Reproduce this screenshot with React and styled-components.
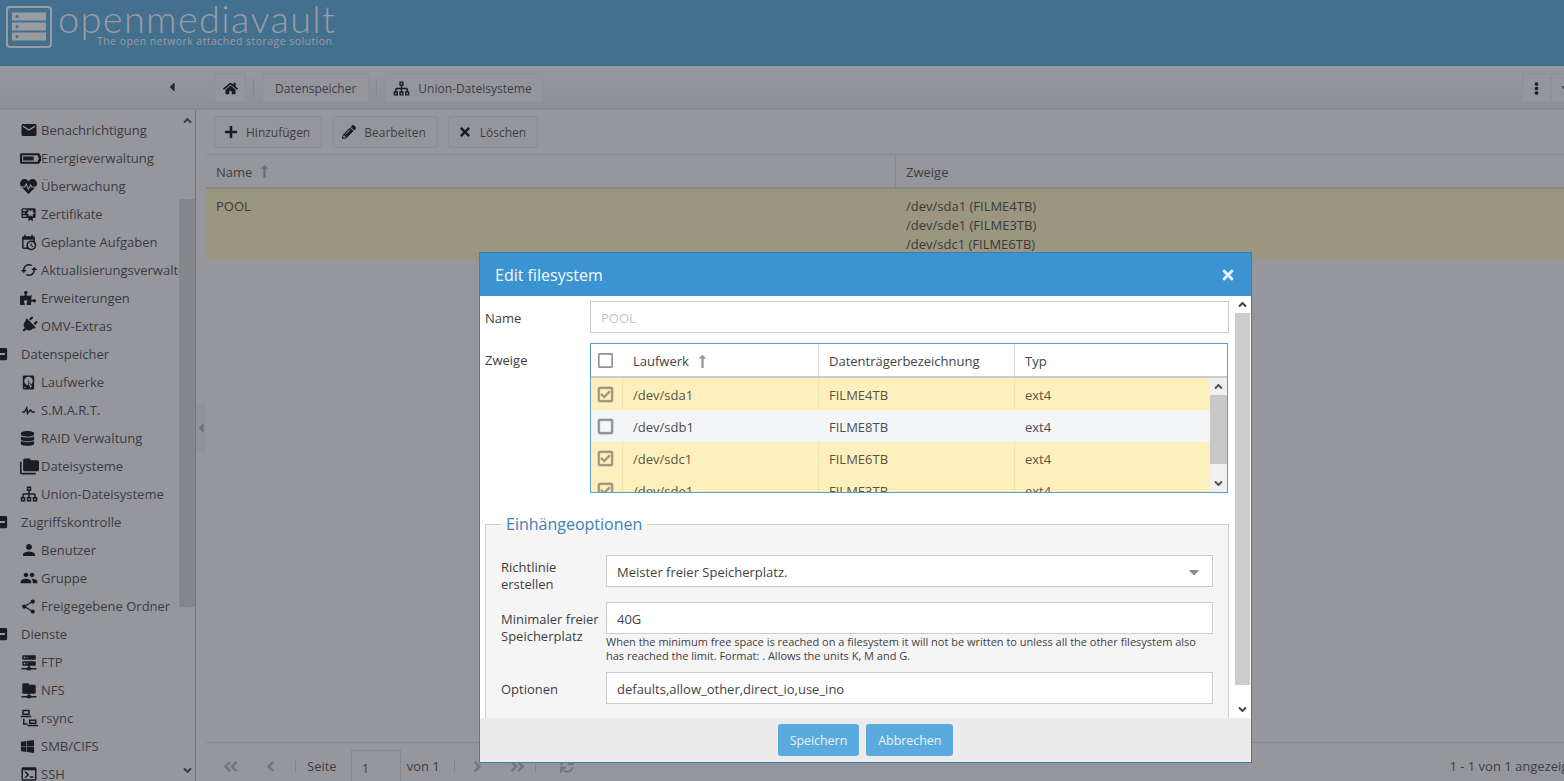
import React from 'react'
import styled, {createGlobalStyle} from 'styled-components'
import {
    FaHome, FaPlus, FaPencilAlt, FaTimes, FaEllipsisV, FaCaretLeft, FaCaretDown, FaLongArrowAltUp,
    FaPuzzlePiece, FaPlug, FaDatabase, FaWindows, FaHeartbeat, FaBatteryThreeQuarters,
    FaAngleUp, FaAngleDown, FaAngleLeft, FaAngleRight, FaAngleDoubleLeft, FaAngleDoubleRight,
    FaMinusSquare, FaRegCheckSquare, FaRegSquare, FaSync,
} from 'react-icons/fa'
import {MdEmail, MdPerson, MdPeople, MdShare, MdCached} from 'react-icons/md'

const Mdi = ({d, size = 18}) => (
    <svg width={size} height={size} viewBox="0 0 24 24" fill="currentColor"><path d={d} /></svg>
)

const certificate = 'M4,3C2.89,3 2,3.89 2,5V15A2,2 0 0,0 4,17H12V22L15,19L18,22V17H20A2,2 0 0,0 22,15V8L22,6V5A2,2 0 0,0 20,3H16V3H4M12,5L15,7L18,5V8.5L21,10L18,11.5V15L15,13L12,15V11.5L9,10L12,8.5V5M4,5H9V7H4V5M4,9H7V11H4V9M4,13H9V15H4V13Z'
const calendarClock = 'M15,13H16.5V15.82L18.94,17.23L18.19,18.53L15,16.69V13M19,8H5V19H9.67C9.24,18.09 9,17.07 9,16A7,7 0 0,1 16,9C17.07,9 18.09,9.24 19,9.67V8M5,21C3.89,21 3,20.1 3,19V5C3,3.89 3.89,3 5,3H6V1H8V3H16V1H18V3H19A2,2 0 0,1 21,5V11.1C22.24,12.36 23,14.09 23,16A7,7 0 0,1 16,23C14.09,23 12.36,22.24 11.1,21H5M16,11.15A4.85,4.85 0 0,0 11.15,16C11.15,18.68 13.32,20.85 16,20.85A4.85,4.85 0 0,0 20.85,16C20.85,13.32 18.68,11.15 16,11.15Z'
const harddisk = 'M6,2H18A2,2 0 0,1 20,4V20A2,2 0 0,1 18,22H6A2,2 0 0,1 4,20V4A2,2 0 0,1 6,2M12,4A6,6 0 0,0 6,10C6,13.31 8.69,16 12.1,16L11.22,13.77C10.95,13.29 11.11,12.68 11.59,12.4L12.45,11.9C12.93,11.63 13.54,11.79 13.82,12.27L15.74,14.69C17.12,13.59 18,11.9 18,10A6,6 0 0,0 12,4M12,9A1,1 0 0,1 13,10A1,1 0 0,1 12,11A1,1 0 0,1 11,10A1,1 0 0,1 12,9M7,18A1,1 0 0,0 6,19A1,1 0 0,0 7,20A1,1 0 0,0 8,19A1,1 0 0,0 7,18M12.09,13.27L14.58,19.58L17.17,18.08L12.95,12.77L12.09,13.27Z'
const pulse = 'M3,13H5.79L10.1,4.79L11.28,13.75L14.5,9.66L17.83,13H21V15H17L14.67,12.67L9.92,18.73L8.94,11.31L7,15H3V13Z'
const folderMultiple = 'M22,4H14L12,2H6A2,2 0 0,0 4,4V16A2,2 0 0,0 6,18H22A2,2 0 0,0 24,16V6A2,2 0 0,0 22,4M2,6H0V11H0V20A2,2 0 0,0 2,22H20V20H2V6Z'
const sitemap = 'M9,2V8H11V11H5C3.89,11 3,11.89 3,13V16H1V22H7V16H5V13H11V16H9V22H15V16H13V13H19V16H17V22H23V16H21V13C21,11.89 20.1,11 19,11H13V8H15V2H9M3,18H5V20H3V18M11,18H13V20H11V18M19,18H21V20H19V18M11,4H13V6H11V4Z'
const serverNetwork = 'M13,19H14A1,1 0 0,1 15,20H22V22H15A1,1 0 0,1 14,23H10A1,1 0 0,1 9,22H2V20H9A1,1 0 0,1 10,19H11V17H4A1,1 0 0,1 3,16V12A1,1 0 0,1 4,11H20A1,1 0 0,1 21,12V16A1,1 0 0,1 20,17H13V19M4,3H20A1,1 0 0,1 21,4V8A1,1 0 0,1 20,9H4A1,1 0 0,1 3,8V4A1,1 0 0,1 4,3M9,7H10V5H9V7M9,15H10V13H9V15M5,5V7H7V5H5M5,13V15H7V13H5Z'
const folderNetwork = 'M3,15V5A2,2 0 0,1 5,3H11L13,5H19A2,2 0 0,1 21,7V15A2,2 0 0,1 19,17H13V19H14A1,1 0 0,1 15,20H22V22H15A1,1 0 0,1 14,23H10A1,1 0 0,1 9,22H2V20H9A1,1 0 0,1 10,19H11V17H5A2,2 0 0,1 3,15Z'
const consoleBox = 'M20,19V7H4V19H20M20,3A2,2 0 0,1 22,5V19C22,20.1 21.1,21 20,21H4A2,2 0 0,1 2,19V5C2,3.89 2.9,3 4,3H20M13,17V15H18V17H13M9.58,13L5.57,9H8.4L11.7,12.3C12.09,12.69 12.09,13.33 11.7,13.72L8.42,17H5.59L9.58,13Z'
const laptops = 'M3,1H13V8H3V1M5,3V6H11V3H5M1,9H15V11H1V9M4,13H6V19H10V21H4V13M12,14H22V20H12V14M14,16V18H20V16H14M10,21H24V23H10V21Z'

const GlobalStyle = createGlobalStyle`
  html, body {
    margin: 0;
    height: 100%;
    overflow: hidden;
    background: #96979c;
    font-family: "Open Sans", "Liberation Sans", sans-serif;
    font-size: 13px;
    color: #3d3e44;
  }
`

const Page = styled.div`
  position: relative;
  width: 1564px;
  height: 781px;
  overflow: hidden;
  display: flex;
  flex-direction: column;
`

const Header = styled.header`
  height: 66px;
  flex: none;
  background: #44708f;
  display: flex;
  gap: 6px;
  padding: 6px 0 0 6px;
  box-sizing: border-box;
  color: #9a9ca3;
`

const Brand = styled.div`
  width: 280px;
`

const BrandName = styled.div`
  font-family: Lato, "Open Sans", sans-serif;
  font-weight: 300;
  font-size: 38px;
  line-height: 34px;
  letter-spacing: 1.3px;
  margin-top: -5px;
  white-space: nowrap;
`

const BrandTag = styled.div`
  font-size: 10.5px;
  line-height: 12px;
  letter-spacing: 0.45px;
  margin-left: 39px;
  white-space: nowrap;
`

const Body = styled.div`
  flex: 1;
  display: flex;
  min-height: 0;
`

const Side = styled.aside`
  width: 196px;
  flex: none;
  display: flex;
  flex-direction: column;
  box-sizing: border-box;
`

const Collapse = styled.div`
  height: 44px;
  flex: none;
  display: flex;
  align-items: center;
  justify-content: flex-end;
  padding-right: 17px;
  color: #26272c;
  font-size: 14px;
  background: linear-gradient(#98999e, #8e8f94);
  border-bottom: 2px solid #87888d;
  box-sizing: border-box;
`

const SideBody = styled.div`
  flex: 1;
  display: flex;
  min-height: 0;
  border-right: 1px solid #5b7d99;
`

const Menu = styled.nav`
  width: 179px;
  flex: none;
  overflow: hidden;
  padding-top: 6px;
  box-sizing: border-box;
`

const MenuRow = styled.div`
  height: 28px;
  display: flex;
  align-items: center;
  white-space: nowrap;
  color: #3a3b42;
`

const MenuIcon = styled.span`
  width: 21px;
  margin-left: 20px;
  flex: none;
  display: flex;
  align-items: center;
  color: #1b1c22;
  transform: ${({$tilt}) => ($tilt ? 'rotate(45deg)' : 'none')};
`

const MenuGroupIcon = styled.span`
  width: 21px;
  flex: none;
  display: flex;
  align-items: center;
  color: #1b1c22;

  svg {
    margin-left: -6px;
  }
`

const Track = styled.div`
  width: ${({$width}) => $width}px;
  flex: none;
  display: flex;
  flex-direction: column;
  background: ${({$bg}) => $bg};
  color: ${({$arrow}) => $arrow};
`

const TrackEnd = styled.div`
  height: ${({$height}) => $height}px;
  flex: none;
  display: flex;
  align-items: center;
  justify-content: center;
  font-size: 13px;
`

const TrackRail = styled.div`
  flex: 1;
  min-height: 0;
  display: flex;
  flex-direction: column;
`

const Thumb = styled.div`
  background: ${({$color}) => $color};
  margin-top: ${({$top}) => $top}px;
  height: ${({$height}) => $height}px;
  flex: none;
`

const Scroll = ({width, bg, arrow, thumb, top, height, end}) => (
    <Track $width={width} $bg={bg} $arrow={arrow}>
        <TrackEnd $height={end}><FaAngleUp /></TrackEnd>
        <TrackRail><Thumb $color={thumb} $top={top} $height={height} /></TrackRail>
        <TrackEnd $height={end}><FaAngleDown /></TrackEnd>
    </Track>
)

const Splitter = styled.div`
  width: 10px;
  flex: none;
  display: flex;
  flex-direction: column;
  color: #6e6f75;
  font-size: 14px;
`

const SplitHandle = styled.div`
  margin-top: 338px;
  height: 48px;
  background: #919297;
  display: flex;
  align-items: center;
  justify-content: center;
`

const Main = styled.main`
  flex: 1;
  min-width: 0;
  display: flex;
  flex-direction: column;
`

const Crumbs = styled.div`
  height: 44px;
  flex: none;
  margin-left: -10px;
  padding: 7px 0 0 18px;
  box-sizing: border-box;
  display: flex;
  align-items: flex-start;
  background: linear-gradient(#98999e, #8e8f94);
  border-bottom: 2px solid #87888d;
`

const Crumb = styled.div`
  height: 30px;
  padding: 0 ${({$right = 12}) => $right}px 0 ${({$left = 12}) => $left}px;
  display: flex;
  align-items: center;
  gap: 8px;
  background: #95969b;
  border: 1px solid #8f9095;
  border-radius: 2px;
  color: #3d3e44;
  font-size: 12px;
  box-sizing: border-box;
  white-space: nowrap;

  svg {
    color: #1b1c22;
  }
`

const CrumbSep = styled.div`
  width: 1px;
  height: 18px;
  margin: 6px 8px 0 7px;
  background: #85868b;
`

const CrumbRight = styled.div`
  margin-left: auto;
  display: flex;
  margin-right: -16px;
`

const CrumbSquare = styled.div`
  width: 29px;
  height: 30px;
  display: flex;
  align-items: center;
  justify-content: center;
  background: #95969b;
  border: 1px solid #8f9095;
  box-sizing: border-box;
  color: ${({$muted}) => ($muted ? '#55565c' : '#1b1c22')};
  font-size: ${({$muted}) => ($muted ? '16px' : '13px')};
`

const Toolbar = styled.div`
  height: 45px;
  flex: none;
  padding: 6px 8px 0;
  box-sizing: border-box;
  display: flex;
  gap: 10px;
  align-items: flex-start;
  border-bottom: 1px solid #87888d;
`

const ToolButton = styled.div`
  height: 32px;
  padding: 0 11px 0 9px;
  display: flex;
  align-items: center;
  gap: 8px;
  box-sizing: border-box;
  border: 1px solid #8c8d92;
  border-radius: 3px;
  background: #95969b;
  font-size: 12px;

  svg {
    color: #1b1c22;
    font-size: 14px;
  }
`

const GridHead = styled.div`
  height: 34px;
  flex: none;
  display: grid;
  grid-template-columns: 689px 1fr;
  border-bottom: 2px solid #87888d;
  box-sizing: border-box;
`

const HeadCell = styled.div`
  display: flex;
  align-items: center;
  gap: 5px;
  padding: 1px 0 0 ${({$pad}) => $pad}px;

  & + & {
    border-left: 1px solid #87888d;
  }

  svg {
    color: #6e6f75;
  }
`

const GridRow = styled.div`
  height: 70px;
  flex: none;
  background: #9b967f;
  display: grid;
  grid-template-columns: 690px 1fr;
  padding-top: 8px;
  box-sizing: border-box;
  line-height: 19px;
  color: #3a3a3a;
`

const GridCell = styled.div`
  padding-left: ${({$pad}) => $pad}px;
`

const GridFill = styled.div`
  flex: 1;
`

const Pager = styled.div`
  height: 39px;
  flex: none;
  border-top: 1px solid #87888d;
  display: flex;
  align-items: flex-start;
  padding: 7px 0 0 16px;
  box-sizing: border-box;
  white-space: nowrap;
`

const PagerIcon = styled.span`
  width: ${({$width}) => $width}px;
  height: 32px;
  flex: none;
  display: flex;
  align-items: center;
  color: #75767c;
  font-size: 17px;
`

const PagerSep = styled.div`
  width: 1px;
  height: 14px;
  margin: 9px ${({$right}) => $right}px 0 ${({$left = 0}) => $left}px;
  background: #85868b;
  flex: none;
`

const PagerText = styled.span`
  line-height: 32px;
  flex: none;
`

const PagerInput = styled.div`
  width: 50px;
  height: 40px;
  margin: 0 6px 0 14px;
  border: 1px solid #87888d;
  box-sizing: border-box;
  padding: 8px 0 0 10px;
  flex: none;
`

const PagerInfo = styled.span`
  margin-left: auto;
  line-height: 32px;
  margin-right: -9px;
`

const Dialog = styled.section`
  position: absolute;
  left: 479px;
  top: 252px;
  width: 773px;
  height: 511px;
  box-sizing: border-box;
  border: 1px solid #3a7fb2;
  display: flex;
  flex-direction: column;
  background: #fff;
`

const DialogTitle = styled.div`
  height: 43px;
  flex: none;
  background: #3b94d1;
  color: #f4f8fb;
  font-size: 16px;
  padding: 0 15px;
  display: flex;
  align-items: center;
  justify-content: space-between;

  svg {
    color: #e6f1f9;
    font-size: 16px;
  }
`

const DialogBody = styled.div`
  flex: 1;
  min-height: 0;
  display: flex;
`

const DialogContent = styled.div`
  width: 755px;
  flex: none;
  overflow: hidden;
  padding: 5px 6px 0 5px;
  box-sizing: border-box;
`

const FormRow = styled.div`
  display: grid;
  grid-template-columns: ${({$label}) => $label}px 1fr;
  margin-bottom: ${({$gap}) => $gap}px;
  color: #3d3e44;
`

const FormLabel = styled.div`
  padding-top: ${({$top}) => $top}px;
  line-height: 17px;
`

const TextBox = styled.div`
  height: 32px;
  box-sizing: border-box;
  border: 1px solid #ccc;
  background: #fff;
  padding: 1px 10px 0;
  display: flex;
  align-items: center;
  justify-content: space-between;
  color: ${({$muted}) => ($muted ? '#c4c4c4' : '#444')};

  svg {
    color: #8d8d8d;
    font-size: 16px;
  }
`

const Picker = styled.div`
  height: 150px;
  width: 638px;
  box-sizing: border-box;
  border: 1px solid #5b9fc4;
  background: #fff;
  display: flex;
  flex-direction: column;
  overflow: hidden;
`

const PickerHead = styled.div`
  height: 34px;
  flex: none;
  display: grid;
  grid-template-columns: 32px 196px 196px 1fr;
  border-bottom: 2px solid #ccc;
  box-sizing: border-box;
`

const PickerHeadCell = styled.div`
  display: flex;
  align-items: center;
  gap: 6px;
  padding: ${({$center}) => ($center ? 0 : 2)}px 0 0 ${({$center}) => ($center ? 6 : 10)}px;
  border-right: ${({$center}) => ($center ? 'none' : '1px solid #d8d8d8')};
  color: #444;

  &:last-child {
    border-right: none;
  }

  svg {
    color: #999;
  }
`

const PickerBody = styled.div`
  flex: 1;
  min-height: 0;
  display: flex;
`

const PickerRows = styled.div`
  flex: 1;
  min-width: 0;
  overflow: hidden;
`

const PickerRow = styled.div`
  height: 32px;
  display: grid;
  grid-template-columns: 32px 196px 196px 1fr;
  background: ${({$on}) => ($on ? '#fef0bd' : '#f4f5f7')};
  color: ${({$on}) => ($on ? '#5a5340' : '#4a4b50')};
`

const PickerCell = styled.div`
  display: flex;
  align-items: center;
  padding: ${({$center}) => ($center ? 0 : 2)}px 0 0 ${({$center}) => ($center ? 6 : 10)}px;
  border-right: 1px solid ${({$on}) => ($on ? '#efe3b4' : '#f4f5f7')};

  &:last-child {
    border-right: none;
  }

  svg {
    font-size: 17px;
    color: ${({$on}) => ($on ? '#9d9682' : '#8f9095')};
    stroke: currentColor;
    stroke-width: 24;
  }
`

const Fieldset = styled.fieldset`
  margin: 20px 0 0;
  width: 744px;
  height: 220px;
  box-sizing: border-box;
  border: 1px solid #cfcfcf;
  border-bottom: none;
  background: #f5f5f5;
  padding: 20px 15px 0;
`

const Legend = styled.legend`
  font-size: 16px;
  color: #3f83b8;
  padding: 0 5px;
  line-height: 22px;
`

const Hint = styled.div`
  font-size: 11px;
  line-height: 14px;
  padding-top: 1px;
  color: #3d3e44;
`

const DialogFooter = styled.div`
  height: 44px;
  flex: none;
  background: #ececec;
  display: flex;
  justify-content: center;
  gap: 7px;
  padding-top: 6px;
  box-sizing: border-box;
`

const FooterButton = styled.div`
  height: 32px;
  padding: 0 12px;
  display: flex;
  align-items: center;
  background: #5aaade;
  border-radius: 3px;
  color: #eaf4fb;
  font-size: 12.4px;
`

const menu = [
    {icon: <MdEmail size={18} />, text: 'Benachrichtigung'},
    {icon: <FaBatteryThreeQuarters size={21} />, text: 'Energieverwaltung'},
    {icon: <FaHeartbeat size={17} />, text: 'Überwachung'},
    {icon: <Mdi d={certificate} size={17} />, text: 'Zertifikate'},
    {icon: <Mdi d={calendarClock} size={17} />, text: 'Geplante Aufgaben'},
    {icon: <MdCached size={18} />, text: 'Aktualisierungsverwaltung'},
    {icon: <FaPuzzlePiece size={16} />, text: 'Erweiterungen'},
    {icon: <FaPlug size={17} />, tilt: true, text: 'OMV-Extras'},
    {group: true, text: 'Datenspeicher'},
    {icon: <Mdi d={harddisk} size={17} />, text: 'Laufwerke'},
    {icon: <Mdi d={pulse} size={17} />, text: 'S.M.A.R.T.'},
    {icon: <FaDatabase size={15} />, text: 'RAID Verwaltung'},
    {icon: <Mdi d={folderMultiple} size={19} />, text: 'Dateisysteme'},
    {icon: <Mdi d={sitemap} size={18} />, text: 'Union-Dateisysteme'},
    {group: true, text: 'Zugriffskontrolle'},
    {icon: <MdPerson size={18} />, text: 'Benutzer'},
    {icon: <MdPeople size={18} />, text: 'Gruppe'},
    {icon: <MdShare size={17} />, text: 'Freigegebene Ordner'},
    {group: true, text: 'Dienste'},
    {icon: <Mdi d={serverNetwork} size={18} />, text: 'FTP'},
    {icon: <Mdi d={folderNetwork} size={18} />, text: 'NFS'},
    {icon: <Mdi d={laptops} size={18} />, text: 'rsync'},
    {icon: <FaWindows size={15} />, text: 'SMB/CIFS'},
    {icon: <Mdi d={consoleBox} size={18} />, text: 'SSH'},
]

const drives = [
    {dev: '/dev/sda1', label: 'FILME4TB', on: true},
    {dev: '/dev/sdb1', label: 'FILME8TB', on: false},
    {dev: '/dev/sdc1', label: 'FILME6TB', on: true},
    {dev: '/dev/sde1', label: 'FILME3TB', on: true},
]

const Logo = () => (
    <svg width="46" height="42" viewBox="0 0 46 42" fill="none">
        <rect x="1" y="1" width="44" height="40" rx="3" stroke="currentColor" strokeWidth="2" />
        <rect x="6" y="6.500" width="34" height="8" fill="currentColor" />
        <rect x="6" y="16.500" width="34" height="8" fill="currentColor" />
        <rect x="6" y="26.500" width="34" height="8" fill="currentColor" />
        <circle cx="11" cy="10.500" r="1.500" fill="#44708f" />
        <circle cx="11" cy="20.500" r="1.500" fill="#44708f" />
        <circle cx="11" cy="30.500" r="1.500" fill="#44708f" />
    </svg>
)

const App = () => (
    <Page>
        <GlobalStyle />
        <Header>
            <Logo />
            <Brand>
                <BrandName>openmediavault</BrandName>
                <BrandTag>The open network attached storage solution</BrandTag>
            </Brand>
        </Header>
        <Body>
            <Side>
                <Collapse><FaCaretLeft /></Collapse>
                <SideBody>
                    <Menu>
                        {menu.map((m) => (
                            <MenuRow key={m.text}>
                                {m.group ? (
                                    <MenuGroupIcon><FaMinusSquare size={14} /></MenuGroupIcon>
                                ) : (
                                    <MenuIcon $tilt={m.tilt}>{m.icon}</MenuIcon>
                                )}
                                {m.text}
                            </MenuRow>
                        ))}
                    </Menu>
                    <Scroll width={16} bg="#96979c" arrow="#3d3e44" thumb="#85868b" top={68} height={408} end={21} />
                </SideBody>
            </Side>
            <Splitter>
                <SplitHandle><FaCaretLeft /></SplitHandle>
            </Splitter>
            <Main>
                <Crumbs>
                    <Crumb $left={8} $right={7}><FaHome size={15} /></Crumb>
                    <CrumbSep />
                    <Crumb>Datenspeicher</Crumb>
                    <CrumbSep />
                    <Crumb $left={7} $right={10}><Mdi d={sitemap} size={17} />Union-Dateisysteme</Crumb>
                    <CrumbRight>
                        <CrumbSquare><FaEllipsisV /></CrumbSquare>
                        <CrumbSquare $muted><FaCaretDown /></CrumbSquare>
                    </CrumbRight>
                </Crumbs>
                <Toolbar>
                    <ToolButton><FaPlus />Hinzufügen</ToolButton>
                    <ToolButton><FaPencilAlt />Bearbeiten</ToolButton>
                    <ToolButton><FaTimes />Löschen</ToolButton>
                </Toolbar>
                <GridHead>
                    <HeadCell $pad={10}>Name <FaLongArrowAltUp size={15} /></HeadCell>
                    <HeadCell $pad={10}>Zweige</HeadCell>
                </GridHead>
                <GridRow>
                    <GridCell $pad={10}>POOL</GridCell>
                    <GridCell $pad={10}>
                        /dev/sda1 (FILME4TB)<br />
                        /dev/sde1 (FILME3TB)<br />
                        /dev/sdc1 (FILME6TB)
                    </GridCell>
                </GridRow>
                <GridFill />
                <Pager>
                    <PagerIcon $width={40}><FaAngleDoubleLeft /></PagerIcon>
                    <PagerIcon $width={33}><FaAngleLeft /></PagerIcon>
                    <PagerSep $right={11} />
                    <PagerText>Seite</PagerText>
                    <PagerInput>1</PagerInput>
                    <PagerText>von 1</PagerText>
                    <PagerSep $left={14} $right={14} />
                    <PagerIcon $width={40}><FaAngleRight /></PagerIcon>
                    <PagerIcon $width={26}><FaAngleDoubleRight /></PagerIcon>
                    <PagerSep $right={24} />
                    <PagerIcon $width={20}><FaSync size={14} /></PagerIcon>
                    <PagerInfo>1 - 1 von 1 angezeigt</PagerInfo>
                </Pager>
            </Main>
        </Body>
        <Dialog role="dialog">
            <DialogTitle>Edit filesystem <FaTimes /></DialogTitle>
            <DialogBody>
                <DialogContent>
                    <FormRow $label={105} $gap={10}>
                        <FormLabel $top={9}>Name</FormLabel>
                        <TextBox $muted>POOL</TextBox>
                    </FormRow>
                    <FormRow $label={105} $gap={0}>
                        <FormLabel $top={9}>Zweige</FormLabel>
                        <Picker>
                            <PickerHead>
                                <PickerHeadCell $center><FaRegSquare size={17} color="#8f9095" /></PickerHeadCell>
                                <PickerHeadCell>Laufwerk <FaLongArrowAltUp size={15} /></PickerHeadCell>
                                <PickerHeadCell>Datenträgerbezeichnung</PickerHeadCell>
                                <PickerHeadCell>Typ</PickerHeadCell>
                            </PickerHead>
                            <PickerBody>
                                <PickerRows>
                                    {drives.map((d) => (
                                        <PickerRow key={d.dev} $on={d.on}>
                                            <PickerCell $center $on={d.on}>{d.on ? <FaRegCheckSquare /> : <FaRegSquare />}</PickerCell>
                                            <PickerCell $on={d.on}>{d.dev}</PickerCell>
                                            <PickerCell $on={d.on}>{d.label}</PickerCell>
                                            <PickerCell $on={d.on}>ext4</PickerCell>
                                        </PickerRow>
                                    ))}
                                </PickerRows>
                                <Scroll width={17} bg="#f0f0f0" arrow="#555" thumb="#c8c8c8" top={0} height={69} end={17} />
                            </PickerBody>
                        </Picker>
                    </FormRow>
                    <Fieldset>
                        <Legend>Einhängeoptionen</Legend>
                        <FormRow $label={105} $gap={9}>
                            <FormLabel $top={4}>Richtlinie<br />erstellen</FormLabel>
                            <TextBox>Meister freier Speicherplatz.<FaCaretDown /></TextBox>
                        </FormRow>
                        <FormRow $label={105} $gap={9}>
                            <FormLabel $top={9}>Minimaler freier<br />Speicherplatz</FormLabel>
                            <div>
                                <TextBox>40G</TextBox>
                                <Hint>When the minimum free space is reached on a filesystem it will not be written to unless all the other filesystem also has reached the limit. Format: . Allows the units K, M and G.</Hint>
                            </div>
                        </FormRow>
                        <FormRow $label={105} $gap={0}>
                            <FormLabel $top={9}>Optionen</FormLabel>
                            <TextBox>defaults,allow_other,direct_io,use_ino</TextBox>
                        </FormRow>
                    </Fieldset>
                </DialogContent>
                <Scroll width={15} bg="#fff" arrow="#444" thumb="#ccc" top={0} height={372} end={17} />
            </DialogBody>
            <DialogFooter>
                <FooterButton>Speichern</FooterButton>
                <FooterButton>Abbrechen</FooterButton>
            </DialogFooter>
        </Dialog>
    </Page>
)

export default App
